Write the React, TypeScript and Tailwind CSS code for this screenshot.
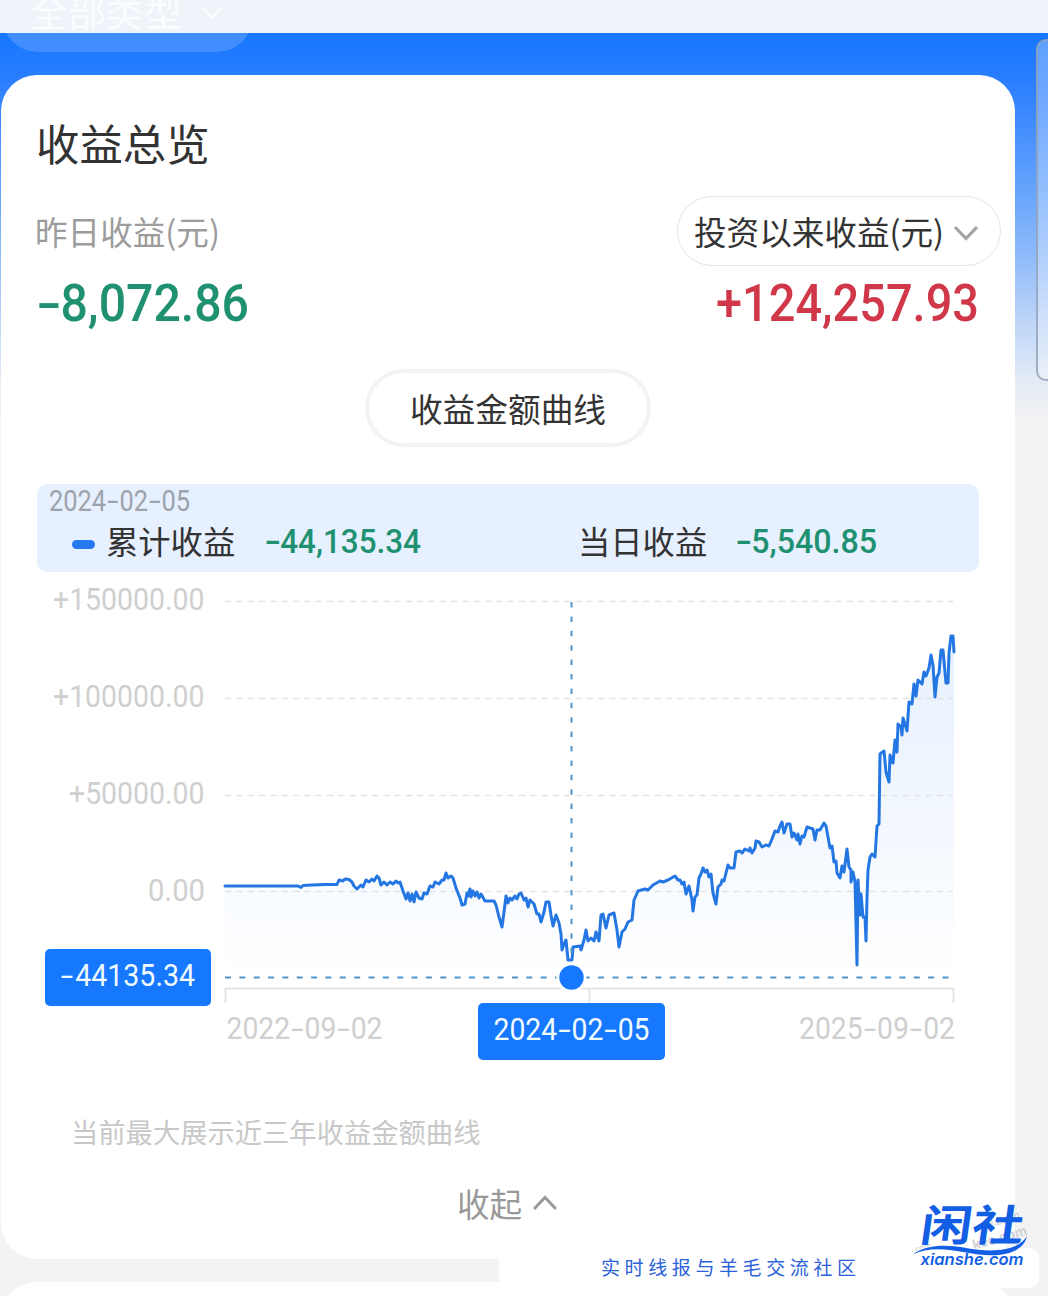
const LINE =
  "225,886 298,886 301,887.5 303,885.5 312,885 325,884.5 337,884.5 339,880 343,881 345,879 349,879.5 352,882 354,886 357,889 361,885 363,887 366,880 369,882 372,879 374,881 377,876 379,878 381,885 384,882 387,885 390,882 393,884 396,881 398,883 400,882 403,891 406,899 408,893 410,901 412,894 414,902 416,892 419,898 422,899 424,893 427,894 430,886 433,887 435,882 439,884 442,880 444,880 446,873 448,878 451,876 453,878 456,888 460,898 462,905 465,904 467,893 468,896 470,889 471,897 473,891 475,896 477,892 479,898 481,894 485,901 494,901 496,905 499,917 502,927 504,912 506,896 508,903 510,898 512,900 515,896 517,899 519,894 521,893 524,900 526,898 528,907 530,900 534,904 537,914 539,914 541,922 544,912 546,902 549,902 551,915 553,926 556,915 559,923 561,934 562,950 564,944 566,940 568,960 572,960 573,947 580,946 581,950 584,940 586,930 588,941 591,938 594,941 596,932 599,941 601,915 603,914 606,928 609,915 614,913 617,930 619,947 622,932 625,929 628,922 632,920 634,900 638,891 645,889 648,890 653,885 660,881 663,882 668,880 675,876 678,880 680,880 682,884 684,882 686,894 689,886 692,900 693,911 695,897 697,895 699,878 701,874 703,868 705,872 707,870 709,877 711,874 713,893 716,904 718,887 721,884 722,880 724,881 728,865 730,868 734,868 736,852 740,851 742,853 745,849 749,851 750,848 752,853 755,848 756,841 759,842 762,847 766,845 769,846 772,839 775,831 778,832 780,826 782,822 784,833 787,824 790,824 792,837 794,833 797,840 798,834 800,844 802,836 804,837 807,827 813,829 815,840 817,830 820,830 824,823 826,826 830,848 832,846 834,862 836,861 837,873 840,878 842,866 844,872 847,849 849,867 851,870 851,882 853,872 855,882 857,965 858,880 860,915 861,894 863,917 865,917 866,941 867,898 868,870 870,857 872,854 875,857 877,826 879,824 879.5,790 880,754 884,751 886,772 889,782 890,755 892,762 893,763 895,740 897,752 898,724 901,727 902,735 903,718 907,731 909,702 912,704 914,684 916,696 918,680 922,684 924,672 926,676 929,668 931,655 933,665 935,697 937,677 939,673 941,650 943,650 946,683 948,683 949,653 951,636 953,636 954,652";

const HYPHEN_SLOT = 0.46;
const HYPHEN_STRETCH = 1.45;

type FigureProps = {
  x?: number;
  y: number;
  w: number;
  size?: number;
  weight?: number;
  fill?: string;
  children: string;
};

/* Numerals fitted to a fixed width, with hyphens set wider than the font's own. */
function Figure({ x = 0, y, w, size = 31, weight = 400, fill = "currentColor", children }: FigureProps) {
  const parts = children.split(/(-)/).filter(Boolean);
  const slot = size * HYPHEN_SLOT;
  const hyphens = parts.filter((p) => p === "-").length;
  const chars = children.length - hyphens;
  const unit = (w - hyphens * slot) / chars;
  let cursor = x;
  return (
    <g fill={fill} fontSize={size} fontWeight={weight} fontFamily="Roboto, sans-serif">
      {parts.map((part, i) => {
        const start = cursor;
        if (part === "-") {
          cursor += slot;
          const inset = i > 0 ? size * 0.03 : -size * 0.01;
          return (
            <text key={i} transform={`translate(${start + inset} ${y}) scale(${HYPHEN_STRETCH} 1)`}>
              -
            </text>
          );
        }
        const width = part.length * unit;
        cursor += width;
        return (
          <text key={i} x={start} y={y} textLength={width} lengthAdjust="spacingAndGlyphs">
            {part}
          </text>
        );
      })}
    </g>
  );
}

function Num({ w, h, size, weight, className, children }: { w: number; h: number; size: number; weight: number; className: string; children: string }) {
  return (
    <svg width={w} height={h} className={className}>
      <Figure y={h - 1} w={w} size={size} weight={weight}>
        {children}
      </Figure>
    </svg>
  );
}

function Chart() {
  return (
    <svg className="mt-[8px] block" width="1014" height="490" viewBox="1 580 1014 490">
      <defs>
        <linearGradient id="area" x1="0" y1="636" x2="0" y2="978" gradientUnits="userSpaceOnUse">
          <stop offset="0" stopColor="#e6f0fd" />
          <stop offset="0.75" stopColor="#f8fbff" />
          <stop offset="1" stopColor="#ffffff" />
        </linearGradient>
      </defs>
      <polygon points={`225,977 ${LINE} 954,977`} fill="url(#area)" />
      {[601.5, 698.5, 795.5, 891.5].map((y) => (
        <line key={y} x1="225" x2="953" y1={y} y2={y} stroke="#e2e4e6" strokeWidth="1.7" strokeDasharray="6.5 4.8" />
      ))}
      <Figure x={53} y={609.5} w={151.5} fill="#cfcfd0">+150000.00</Figure>
      <Figure x={53} y={706.5} w={151.5} fill="#cfcfd0">+100000.00</Figure>
      <Figure x={69} y={803.5} w={135.5} fill="#cfcfd0">+50000.00</Figure>
      <Figure x={148} y={900.5} w={57} fill="#cfcfd0">0.00</Figure>
      <path d="M225.5 1003V988.5H953.5V1003M589.5 988.5V1004" fill="none" stroke="#dfe0e3" strokeWidth="1.7" />
      <polyline points={LINE} fill="none" stroke="#2477e3" strokeWidth="3" strokeLinejoin="round" strokeLinecap="round" />
      <line x1="571.5" x2="571.5" y1="602" y2="962" stroke="#5295ca" strokeWidth="2" strokeDasharray="5.5 8.9" />
      <line x1="225" x2="953" y1="977.5" y2="977.5" stroke="#5295ca" strokeWidth="2" strokeDasharray="6 8.35" />
      <circle cx="571.5" cy="977.5" r="15" fill="#fff" />
      <circle cx="571.5" cy="977.5" r="12.2" fill="#1677ff" />
      <rect x="45" y="949" width="166" height="57" rx="5" fill="#1677ff" />
      <Figure x={61} y={986} w={134} fill="#f0fbff">-44135.34</Figure>
      <rect x="478" y="1003" width="187" height="57" rx="5" fill="#1677ff" />
      <Figure x={493.5} y={1039.5} w={156} fill="#f0fbff">2024-02-05</Figure>
      <Figure x={226.5} y={1038.5} w={156} fill="#cfcfd0">2022-09-02</Figure>
      <Figure x={799} y={1038.5} w={156} fill="#cfcfd0">2025-09-02</Figure>
    </svg>
  );
}

function Logo() {
  return (
    <svg className="absolute left-[908px] top-[1196px]" width="132" height="80" viewBox="908 1196 132 80">
      <g fill="#cfd1d5" fontWeight="700" fontFamily="Liberation Sans, sans-serif">
        <text transform="translate(974 1250) rotate(-16)" fontSize="14">kee.com</text>
        <text transform="translate(986 1229) rotate(-18)" fontSize="11">w.zuan</text>
        <text transform="translate(916 1252) rotate(-16)" fontSize="8">com</text>
      </g>
      <text
        transform="translate(919 1240.5) skewX(-8)"
        fontSize="43"
        fontWeight="700"
        textLength="103"
        lengthAdjust="spacingAndGlyphs"
        fill="#125fe6"
        fontFamily="Noto Sans CJK SC, sans-serif"
      >
        闲社
      </text>
      <path d="M913 1254.5C925 1245 945 1244 966 1248C992 1253 1018 1251 1027 1236C1023 1256 993 1258 966 1252.5C945 1248.500 928 1247 913 1254.5Z" fill="#125fe6" stroke="#fff" strokeWidth="1.6" paintOrder="stroke" />
      <text
        x="920.5"
        y="1265"
        textLength="103"
        lengthAdjust="spacingAndGlyphs"
        fontSize="16.500"
        fontWeight="600"
        fontStyle="italic"
        fill="#125fe6"
        fontFamily="Inter, Liberation Sans, sans-serif"
      >
        xianshe.com
      </text>
    </svg>
  );
}

export default function App() {
  return (
    <div className="relative h-[1296px] w-[1048px] overflow-hidden bg-[#f3f3f3] font-['Noto_Sans_CJK_SC',sans-serif] text-[#333]">
      <div className="absolute inset-x-0 top-0 h-[430px] bg-[linear-gradient(to_bottom,#1677ff_33px,#2a7eff_80px,#3f8bff_120px,#5fa0fc_180px,#8bb9fa_250px,#bcd4f8_320px,#e3ebf5_380px,#f3f3f3_420px)]" />
      <div className="absolute left-[2px] -top-[20px] h-[72px] w-[251px] rounded-full bg-[#418fff]" />
      <div className="absolute left-[1036px] top-[39px] h-[342px] w-[30px] rounded-[10px] border-2 border-[#8f9fb8]/80 bg-white/30" />
      <header className="relative h-[33px] overflow-hidden bg-[#eff4fb]">
        <div className="ml-[30px] flex -translate-y-[16px] items-center gap-[18px] text-[38px] leading-[52px] text-white/75">
          <span>全部类型</span>
          <svg width="24" height="14" viewBox="0 0 24 14" fill="none" stroke="currentColor" strokeWidth="2.5" className="mt-[6px]"><path d="M2 1L12 12L22 1" /></svg>
        </div>
      </header>

      <main className="relative ml-px mt-[42px] h-[1184px] w-[1014px] overflow-hidden rounded-[36px] bg-white pt-[38px]">
        <h1 className="ml-[35px] h-[60px] text-[43.4px] leading-[58px]">收益总览</h1>
        <div className="ml-[34px] mr-[14px] mt-[23px] flex h-[70px] items-center justify-between">
          <span className="text-[32.6px] leading-[48px] text-[#9c9c9c]">昨日收益(元)</span>
          <button className="flex h-[70px] w-[324px] items-center gap-[10px] rounded-full border border-[#e4e4e4] pl-[16px] text-[32.6px] leading-[48px]">
            投资以来收益(元)
            <svg width="24" height="16" viewBox="0 0 24 16" fill="none" stroke="#a3a3a3" strokeWidth="3.2" className="mt-[3px]"><path d="M1 2L12 13.5L23 2" /></svg>
          </button>
        </div>
        <div className="ml-[36px] mr-[36px] flex h-[56px] items-end justify-between">
          <Num w={212} h={48} size={51} weight={500} className="overflow-visible text-[#209170]">-8,072.86</Num>
          <Num w={263} h={48} size={51} weight={500} className="overflow-visible text-[#d03849]">+124,257.93</Num>
        </div>
        <div className="mx-auto mt-[47px] flex h-[78px] w-[286px] items-center justify-center rounded-full border-[4px] border-[#f3f3f3] text-[32.7px] leading-[48px]">
          收益金额曲线
        </div>
        <section className="ml-[36px] mt-[37px] flex h-[88px] w-[942px] flex-col rounded-[10px] bg-[#e7f0fe]">
          <Num w={141} h={28} size={29} weight={400} className="ml-[12px] overflow-visible text-[#9ca3ad]">2024-02-05</Num>
          <div className="flex h-[56px] items-center text-[32.3px] leading-[46px]">
            <i className="ml-[35px] mt-[8px] h-[9px] w-[23px] rounded-full bg-[#2478f0]" />
            <span className="ml-[11px] w-[129px] whitespace-nowrap">累计收益</span>
            <Num w={156} h={26} size={33} weight={500} className="ml-[30px] mt-[1px] overflow-visible text-[#209170]">-44,135.34</Num>
            <span className="ml-[157px] w-[129px] whitespace-nowrap">当日收益</span>
            <Num w={141} h={26} size={33} weight={500} className="ml-[29px] mt-[1px] overflow-visible text-[#209170]">-5,540.85</Num>
          </div>
        </section>
        <Chart />
        <p className="ml-[70px] mt-[41px] h-[40px] text-[27.3px] leading-[40px] text-[#c8c8c8]">当前最大展示近三年收益金额曲线</p>
        <button className="mx-auto mt-[28px] flex h-[48px] -translate-x-px items-center justify-center gap-[11px] text-[32.6px] leading-[48px] text-[#999]">
          收起
          <svg width="24" height="16" viewBox="0 0 24 16" fill="none" stroke="currentColor" strokeWidth="3"><path d="M1 14L12 2.5L23 14" /></svg>
        </button>
      </main>

      <div className="relative ml-px mt-[23px] h-[80px] w-[1014px] rounded-[36px] bg-white" />

      <div className="absolute left-[499px] top-[1248px] h-[40px] w-[540px] rounded-r-[9px] bg-white" />
      <div className="absolute left-[601px] top-[1253px] whitespace-nowrap text-[19px] leading-[28px] tracking-[4.6px] text-[#2b62d9]">实时线报与羊毛交流社区</div>
      <Logo />
    </div>
  );
}
